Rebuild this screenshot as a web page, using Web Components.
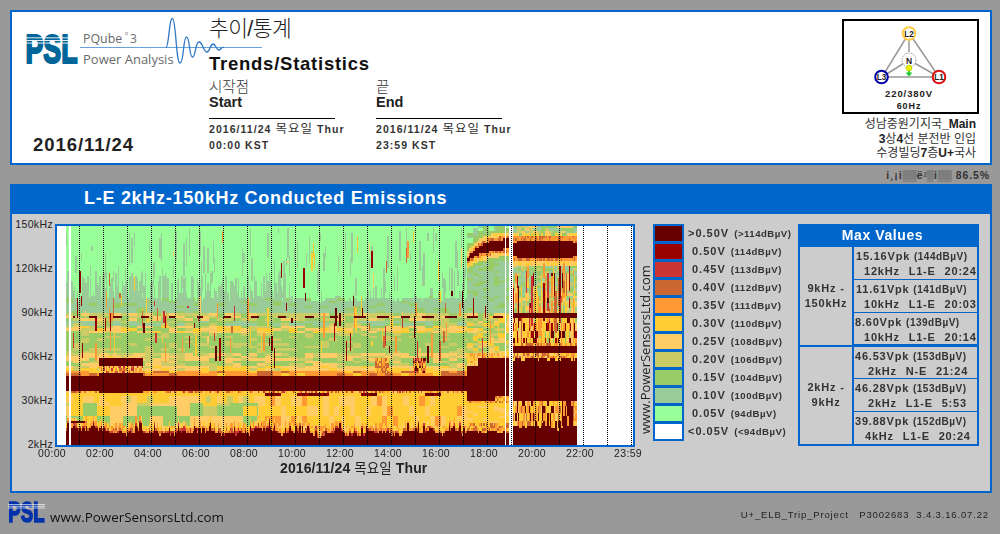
<!DOCTYPE html>
<html lang="ko">
<head>
<meta charset="utf-8">
<title>PQube 3 Trends/Statistics</title>
<style>
  html, body { margin: 0; padding: 0; }
  body {
    width: 1000px; height: 534px; overflow: hidden; background: #999;
    font-family: "Liberation Sans", "Noto Sans CJK KR", sans-serif; color: #222;
  }
</style>
</head>
<body>
<psl-header></psl-header>
<psl-status></psl-status>
<chart-panel></chart-panel>
<psl-footer></psl-footer>

<script>
const KR = '"Liberation Sans", "Noto Sans CJK KR", sans-serif';
const URL_FONT = '"Open Sans", "Noto Sans", sans-serif';

class PslMark extends HTMLElement {
  constructor() { super(); this.attachShadow({ mode: 'open' }); }
  connectedCallback() {
    const color = this.getAttribute('color') || '#006699';
    const w = this.getAttribute('width') || 53;
    this.shadowRoot.innerHTML = `
      <style>
        :host { display: block; line-height: 0; }
        text { font-family: "Liberation Sans", sans-serif; font-weight: bold; }
      </style>
      <svg width="${w}" height="${w * 31 / 53}" viewBox="0 0 53 31">
        <text x="0.500" y="30.200" font-size="41" textLength="52" lengthAdjust="spacingAndGlyphs"
              fill="${color}" stroke="${color}" stroke-width="2.200">PSL</text>
        <g fill="#fff">
          <rect x="0" y="4.400" width="53" height=".9"/>
          <rect x="0" y="7" width="53" height=".9"/>
          <rect x="0" y="9.600" width="53" height=".9"/>
        </g>
      </svg>`;
  }
}
customElements.define('psl-mark', PslMark);

class PslLogo extends HTMLElement {
  constructor() { super(); this.attachShadow({ mode: 'open' }); }
  connectedCallback() {
    this.shadowRoot.innerHTML = `
      <style>
        :host { display: block; position: relative; height: 50px; padding-top: 18px; }
        svg { position: absolute; left: 0; top: 0; overflow: visible; }
        text { font-family: "Open Sans", "Noto Sans", sans-serif; fill: #6a6a6a; }
      </style>
      <psl-mark></psl-mark>
      <svg width="240" height="60" viewBox="25 15 240 60">
        <text x="83" y="43" font-size="12.400">PQube</text>
        <text x="125" y="35" font-size="5">o</text>
        <text x="130" y="43" font-size="12">3</text>
        <text x="83" y="63.500" font-size="13">Power Analysis</text>
        <path d="M80 47.500H262" stroke="#66a3dd" stroke-width="1" fill="none"/>
        <path d="M166 47.500C169 47 169 18 172.500 18.500C176 19 176 63 180 63C184 63 183 37 186.500 37C190 37 189 57 192.500 57C196 57 195 42 199 42C203 42 203 52 207 52C210 52 210 44 213 44C216 44 216 50 219 50C221 50 221 46.500 224 47.500"
              stroke="#2f78c4" stroke-width="1.300" fill="none"/>
      </svg>`;
  }
}
customElements.define('psl-logo', PslLogo);

class PhaseDiagram extends HTMLElement {
  constructor() { super(); this.attachShadow({ mode: 'open' }); }
  connectedCallback() {
    const node = (x, y, c, t) => `
      <circle cx="${x}" cy="${y}" r="6.300" fill="#fff" stroke="${c}" stroke-width="2"/>
      <text x="${x}" y="${y + 3}" font-size="8.200" text-anchor="middle">${t}</text>`;
    this.shadowRoot.innerHTML = `
      <style>
        :host { display: block; width: 137px; height: 95px; box-sizing: border-box; border: 2px solid #000; background: #fff; margin-left: auto; }
        svg { display: block; }
        text { font-family: "Liberation Sans", sans-serif; font-weight: bold; fill: #222; }
      </style>
      <svg width="133" height="91" viewBox="844 21 133 91">
        <path d="M909 33L882 77H939Z M909 60L882 77 M909 60L939 77" stroke="#999" stroke-width="1.500" fill="none"/>
        <path d="M909 33V52" stroke="#999" stroke-width="1.500"/>
        <circle cx="909" cy="60" r="7" fill="#fff" stroke="#999" stroke-width="1" stroke-dasharray="1.500 1"/>
        <text x="909" y="63.500" font-size="8.500" text-anchor="middle">N</text>
        <path d="M909 69V75" stroke="#22cc33" stroke-width="2"/>
        <path d="M905.500 72.500H912.500L909 76.500Z" fill="#22cc33"/>
        <circle cx="909" cy="68" r="3" fill="#eeee00" stroke="#99cc00" stroke-width=".6"/>
        ${node(909, 33.500, '#ffcc44', 'L2')}
        ${node(881.500, 77, '#0000aa', 'L3')}
        ${node(939, 77, '#dd1111', 'L1')}
        <text x="909" y="97" font-size="9.500" text-anchor="middle" letter-spacing=".9">220/380V</text>
        <text x="909" y="109" font-size="9" text-anchor="middle" letter-spacing=".9">60Hz</text>
      </svg>`;
  }
}
customElements.define('phase-diagram', PhaseDiagram);

class RangeBlock extends HTMLElement {
  constructor() { super(); this.attachShadow({ mode: 'open' }); }
  connectedCallback() {
    const ko = this.getAttribute('ko');
    const en = this.getAttribute('en');
    const time = this.getAttribute('time');
    this.shadowRoot.innerHTML = `
      <style>
        :host { display: block; width: 126px; font-family: ${KR}; }
        .ko { font-size: 14.500px; line-height: 15px; color: #333; font-weight: 300; }
        .en { font-size: 14.500px; line-height: 14px; font-weight: bold; color: #222; }
        .rule { height: 1px; background: #000; margin: 9px 0 2px; }
        .line { font-size: 10.500px; line-height: 16px; font-weight: bold; letter-spacing: 1.050px; color: #333; white-space: nowrap; }
        .line span { font-weight: 400; font-size: 12.500px; }
      </style>
      <div class="ko">${ko}</div>
      <div class="en">${en}</div>
      <div class="rule"></div>
      <div class="line">2016/11/24 <span>목요일</span> Thur</div>
      <div class="line">${time} KST</div>`;
  }
}
customElements.define('range-block', RangeBlock);

class PslHeader extends HTMLElement {
  constructor() { super(); this.attachShadow({ mode: 'open' }); }
  connectedCallback() {
    this.shadowRoot.innerHTML = `
      <style>
        :host {
          display: flex; box-sizing: border-box; width: 982px; height: 155px; margin: 10px 0 0 10px;
          border: 2px solid #0066cc; background: #fff; font-family: ${KR};
        }
        .left { width: 197px; flex: none; display: flex; flex-direction: column; justify-content: space-between; padding: 3px 0 7px 13px; box-sizing: border-box; }
        .date { font-size: 18.500px; font-weight: bold; letter-spacing: .95px; color: #222; padding-left: 8px; line-height: 22px; }
        .mid { flex: 1; padding-top: 3px; }
        .title-ko { font-size: 21.500px; line-height: 29px; color: #222; font-weight: 300; letter-spacing: -.6px; }
        .title-en { font-size: 18.500px; line-height: 22px; font-weight: bold; margin-top: 9px; letter-spacing: .75px; color: #111; }
        .ranges { display: flex; gap: 41px; margin-top: 5px; }
        .right { flex: none; padding: 7px 11px 0 0; box-sizing: border-box; width: 148px; }
        .site { text-align: right; font-size: 12px; line-height: 14.500px; color: #333; margin: 3px 3px 0 -20px; white-space: nowrap; }
        .site b { color: #222; }
      </style>
      <div class="left">
        <psl-logo></psl-logo>
        <div class="date">2016/11/24</div>
      </div>
      <div class="mid">
        <div class="title-ko">추이/통계</div>
        <div class="title-en">Trends/Statistics</div>
        <div class="ranges">
          <range-block ko="시작점" en="Start" time="00:00"></range-block>
          <range-block ko="끝" en="End" time="23:59"></range-block>
        </div>
      </div>
      <div class="right">
        <phase-diagram></phase-diagram>
        <div class="site">성남중원기지국<b>_Main</b><br><b>3</b>상<b>4</b>선 분전반 인입<br>수경빌딩<b>7</b>층<b>U+</b>국사</div>
      </div>`;
  }
}
customElements.define('psl-header', PslHeader);

class PslStatus extends HTMLElement {
  constructor() { super(); this.attachShadow({ mode: 'open' }); }
  connectedCallback() {
    this.shadowRoot.innerHTML = `
      <style>
        :host { display: block; height: 19px; padding-right: 10px; text-align: right; font-family: ${KR}; font-size: 10.500px; line-height: 21px; font-weight: bold; color: #333; letter-spacing: .9px; }
        small { font-size: 10px; font-weight: 400; letter-spacing: 0; }
      </style>
      i¸¡i<small>▒▒</small>ë<small>²▒</small>i<small>▒▒</small> 86.5%`;
  }
}
customElements.define('psl-status', PslStatus);

class HeatMap extends HTMLElement {
  constructor() { super(); this.attachShadow({ mode: 'open' }); }
  connectedCallback() {
    this.shadowRoot.innerHTML = `
      <style>
        :host { display: block; box-sizing: border-box; width: 580px; height: 223px; border: 2px solid #0066cc; background: #fff; }
        canvas { display: block; }
      </style>
      <canvas width="576" height="219"></canvas>`;
    this.draw(this.shadowRoot.querySelector('canvas').getContext('2d'));
  }

  draw(ctx) {
    const pal = ['#ffffff', '#99ff99', '#99cc99', '#99cc66', '#cccc66', '#ffcc66', '#ffcc33', '#ff9933', '#cc6633', '#cc3333', '#990000', '#660000'];
    let seed = 20161124;
    const rnd = () => {
      seed = (seed + 0x6D2B79F5) | 0;
      let t = Math.imul(seed ^ (seed >>> 15), 1 | seed);
      t = (t + Math.imul(t ^ (t >>> 7), 61 | t)) ^ t;
      return ((t ^ (t >>> 14)) >>> 0) / 4294967296;
    };
    const COLS = 432, ROWS = 88;
    const cw = 4 / 3, rh = 2.5;

    // noise tables: cell, per column, slow along time, vertical streaks
    const cell = [], col = [], slow = [], spikes = [], gray = [];
    for (let i = 0; i < COLS; i++) {
      cell.push(Array.from({ length: ROWS }, rnd));
      col.push(rnd());
      const x = 57 + i * cw;
      const list = [];
      const n = x > 512 ? 4 : 2;
      for (let k = 0; k < n; k++) {
        if (rnd() < (x > 512 ? .3 : .2)) {
          const high = rnd() < .22;
          const y0 = x > 512 ? 262 + rnd() * 60 : (high ? 228 + rnd() * 50 : 290 + rnd() * 58);
          const len = 4 + rnd() * (x > 512 ? 40 : 20);
          const lows = [6, 7, 5, 8, 6, 7, 9, 10, 11];
          const highs = [6, 7, 5, 6, 8, 10];
          const lv = high ? highs[Math.floor(rnd() * 6)] : lows[Math.floor(rnd() * 9)];
          list.push([y0, y0 + len, lv]);
        }
      }
      spikes.push(list);
      // grey streaks running down from the top of the green area
      const g = [];
      if (rnd() < .42) { const y0 = 226 + rnd() * 70; g.push([y0, y0 + 6 + rnd() * 30]); }
      if (x < 290 && rnd() < .6) g.push([272 + rnd() * 20, 300]);
      gray.push(g);
    }
    let s = 0;
    for (let i = 0; i < COLS; i++) { s = s * .8 + (rnd() - .5) * 1.300; slow.push(s); }
    const chunk = (i, j, w) => cell[Math.floor(i / w) * w][j];
    const vrun = (i, j, h) => cell[i][Math.floor(j / h) * h];
    const pick = (a, r) => a[Math.min(a.length - 1, Math.floor(r * a.length))];

    const dashes = [[72,75],[88,96],[113,121],[141,148],[168,175],[197,203],[223,231],[251,259],[278,286],[305,313],[330,338],[354,365],[377,388],[400,410],[422,433],[445,456],[467,477],[493,503]];
    const isDash = x => dashes.some(d => x >= d[0] && x <= d[1]);

    const mids = (y, i, j, x) => {
      const c = chunk(i, j, 6);
      if (y < 298 + slow[i] * 2) {
        for (const g of gray[i]) if (y >= g[0] && y < g[1]) return 2;
        return 1;
      }
      if (y < 312) return pick([2, 2, 2, 2, 3, 2], c);
      if (y < 319) return pick([4, 4, 5, 3], c);
      if (y < 326) return pick([2, 3, 3, 2, 4], c);
      if (y < 333) return pick([5, 5, 4, 3, 6], c);
      if (y < 353) return pick([3, 3, 3, 4, 3], c);
      if (y < 359) return pick([5, 5, 4, 3], c);
      if (y < 366) return pick([3, 3, 4, 5], c);
      if (y < 370) return pick([5, 5, 6, 4], c);
      return pick([7, 6, 7, 8], c);
    };

    const levelA = (x, y, i, j) => {
      const c = chunk(i, j, 3), r = cell[i][j];
      const big = x >= 99 && x <= 143;
      if (big && y >= 358 && y < 364.500) return 11;
      if (big && y >= 352 && y < 358) return pick([5, 4, 5, 6], c);
      if (big && y >= 364.500 && y < 373) return pick([7, 8, 6, 5, 9], r);
      if (x >= 375 && x <= 388 && y >= 358 && y < 372) return pick([7, 8, 8, 6], r);
      if (x >= 412 && x <= 425 && y >= 358 && y < 373) return pick([8, 9, 7, 11, 6], r);
      if (y >= (big ? 372 : 375.500) && y < (big ? 393 : 389)) return 11;
      if (x > 70 && x < 84 && y >= 420 && y < 423) return 11;
      const jag = 432 + slow[i] * 3.500 - (x < 100 ? 3 : 0) - (col[i] > .9 ? 6 : 0);
      if (y >= jag) return 11;
      if (y >= jag - 3) return pick([8, 7, 7, 9], r);
      if (y >= jag - 8) return pick([6, 7, 6, 5], vrun(i, j, 3));
      if (y >= 375) {
        if (y < 393) return pick([6, 7, 5, 8, 6, 9], r);
        if (y < 396) return x > 258 && chunk(i, j, 12) > .62 ? pick([11, 10], r) : 6;
        const w = chunk(i, Math.floor(j / 4) * 4, 4);
        if (x > 258) return pick([6, 6, 5, 6, 5, 7], w);
        if (y < 403) return pick([6, 5, 6, 4], w);
        return pick([5, 5, 3, 4, 6, 3, 3], chunk(i, Math.floor(j / 4) * 4, 10));
      }
      if (y >= 314 && y < 317 && isDash(x)) return 11;
      for (const sp of spikes[i]) if (y >= sp[0] && y < sp[1] && x > 71) return sp[2];
      return mids(y, i, j, x);
    };

    const levelB = (x, y, i, j) => {
      const c = chunk(i, j, 4), r = cell[i][j];
      const arc = 259 - 17 * (1 - Math.exp(-(x - 467) / 15));
      const d = Math.abs(y - arc);
      if (y >= (x < 478 ? 365 : 358) && y < (x > 495 ? 395 : 399)) return 11;
      const jag = 431 + slow[i] * 2;
      if (y >= jag) return 11;
      if (y >= 422) return pick([7, 8, 6], r);
      if (y >= 402) return pick([6, 6, 5, 6], c);
      if (y >= 395) return pick([7, 6, 8], r);
      const half = 1.500 + Math.min(3.500, (x - 467) / 5);
      if (d < half) return 11;
      if (d < half + 3) return pick([7, 8, 7], r);
      if (d < half + 7) return pick([5, 6, 5], r);
      if (d < half + 11) return 3;
      if (y < arc) return pick([1, 3, 2, 3], c);
      if (y >= 314 && y < 317 && isDash(x)) return 11;
      for (const sp of spikes[i]) if (y > 285 && y >= sp[0] && y < sp[1]) return sp[2];
      if (y < 312) return pick([2, 2, 2, 3], c);
      if (y < 352) return pick([3, 4, 5, 3, 6], c);
      return pick([5, 6, 7], r);
    };

    const levelC = (x, y, i, j) => {
      const c = chunk(i, j, 3), r = cell[i][j];
      const e = x < 516 || x > 572 ? 2 : 0;
      if (y >= 240 + e && y < 257.500 - e) return 11;
      if (y >= 313 && y < 317.500) return 11;
      if (y >= 346 && y < 352) return 11;
      if (y >= 358 + (r < .2 ? 2 : 0) && y < 399) return 11;
      if (y >= 426 + slow[i] * 3) return 11;
      if (x > 562 && x < 573 && y >= 400) return vrun(i, j, 4) < .8 ? 11 : 7;
      if (y >= 399) {
        if (x > 573) return pick([6, 7, 5], r);
        return pick([7, 6, 8, 5, 7, 6, 11], vrun(i, j, 3));
      }
      for (const sp of spikes[i]) if (y >= sp[0] && y < sp[1] && y < 345) return sp[2];
      if (y < 232) return pick([2, 3, 4, 5], c);
      if (y < 235) return pick([5, 6, 3], r);
      if (y < 260) return pick([7, 7, 8], r);
      if (y < 264) return pick([5, 6, 5], r);
      if (y < 290) return pick([2, 3, 2, 4], c);
      if (y < 313) return pick([3, 4, 2, 5], c);
      if (y < 343) return pick([6, 7, 5, 3, 11, 10, 6], vrun(i, j, 3));
      if (y < 346) return pick([7, 6, 8], r);
      return pick([6, 7, 5, 8], r);
    };

    for (let i = 0; i < COLS; i++) {
      const x = 57 + i * cw;
      for (let j = 0; j < ROWS; j++) {
        const y = 226 + j * rh;
        let lv = 0;
        if (x >= 66 && x < 68) lv = levelA(x, y, i, j);
        else if (x >= 71 && x < 467) lv = levelA(x, y, i, j);
        else if (x >= 467 && x < 504) lv = levelB(x, y, i, j);
        else if (x >= 505.500 && x < 508) lv = levelB(x, y, i, j);
        else if (x >= 512 && x < 576) lv = levelC(x, y, i, j);
        ctx.fillStyle = pal[lv];
        ctx.fillRect(Math.floor(x - 57), Math.floor(y - 226), Math.ceil(cw), Math.ceil(rh));
      }
    }

    // hour gridlines
    ctx.fillStyle = '#000';
    for (let h = 1; h <= 24; h++) {
      const gx = 24 * h - 2;
      for (let y = 0; y < 219; y += 2) ctx.fillRect(gx, y, 1, 1);
    }
  }
}
customElements.define('heat-map', HeatMap);

class HeatChart extends HTMLElement {
  constructor() { super(); this.attachShadow({ mode: 'open' }); }
  connectedCallback() {
    const ys = ['150kHz', '120kHz', '90kHz', '60kHz', '30kHz', '2kHz'];
    const xs = ['00:00','02:00','04:00','06:00','08:00','10:00','12:00','14:00','16:00','18:00','20:00','22:00','23:59'];
    this.shadowRoot.innerHTML = `
      <style>
        :host { display: grid; grid-template-columns: 43px 580px; grid-template-rows: 223px 13px auto; width: 630px; font-family: ${KR}; color: #222; font-size: 10.500px; letter-spacing: .35px; }
        .y { display: flex; flex-direction: column; justify-content: space-between; align-items: flex-end; height: 232px; margin-top: -6px; padding-right: 2px; }
        .y span { line-height: 12px; }
        .x { grid-column: 2; display: flex; justify-content: space-between; width: 604px; margin-left: -17px; line-height: 13px; }
        .x span { width: 28px; text-align: center; }
        .date { grid-column: 2; font-size: 14px; font-weight: bold; line-height: 17px; letter-spacing: .1px; padding-left: 225px; white-space: nowrap; }
        .date span { font-weight: 400; font-size: 13.500px; }
      </style>
      <div class="y">${ys.map(t => `<span>${t}</span>`).join('')}</div>
      <heat-map></heat-map>
      <div class="x">${xs.map(t => `<span>${t}</span>`).join('')}</div>
      <div class="date">2016/11/24 <span>목요일</span> Thur</div>`;
  }
}
customElements.define('heat-chart', HeatChart);

class HeatLegend extends HTMLElement {
  constructor() { super(); this.attachShadow({ mode: 'open' }); }
  connectedCallback() {
    const rows = [
      ['#660000', '>0.50V', '(>114dBµV)', 1], ['#990000', '0.50V', '(114dBµV)'],
      ['#cc3333', '0.45V', '(113dBµV)'], ['#cc6633', '0.40V', '(112dBµV)'],
      ['#ff9933', '0.35V', '(111dBµV)'], ['#ffcc33', '0.30V', '(110dBµV)'],
      ['#ffcc66', '0.25V', '(108dBµV)'], ['#cccc66', '0.20V', '(106dBµV)'],
      ['#99cc66', '0.15V', '(104dBµV)'], ['#99cc99', '0.10V', '(100dBµV)'],
      ['#99ff99', '0.05V', '(94dBµV)'], ['#ffffff', '<0.05V', '(<94dBµV)', 1]
    ];
    const esc = t => t.replace('<', '&lt;');
    this.shadowRoot.innerHTML = `
      <style>
        :host { display: flex; align-items: flex-start; gap: 4px; width: 145px; font-family: ${KR}; color: #333; }
        .bar { display: flex; flex-direction: column; gap: 3px; background: #0066cc; padding: 2px; width: 27px; flex: none; }
        .bar i { display: block; height: 15px; }
        .labels { display: flex; flex-direction: column; gap: 3px; padding-top: 2px; white-space: nowrap; }
        .labels div { height: 15px; line-height: 15px; font-weight: bold; font-size: 11px; letter-spacing: 1px; padding-left: 4px; }
        .labels div.edge { padding-left: 0; }
        .labels small { font-size: 9.600px; letter-spacing: .5px; margin-left: 1px; }
      </style>
      <div class="bar">${rows.map(r => `<i style="background:${r[0]}"></i>`).join('')}</div>
      <div class="labels">${rows.map(r => `<div class="${r[3] ? 'edge' : ''}">${esc(r[1])} <small>${esc(r[2])}</small></div>`).join('')}</div>`;
  }
}
customElements.define('heat-legend', HeatLegend);

class MaxValues extends HTMLElement {
  constructor() { super(); this.attachShadow({ mode: 'open' }); }
  connectedCallback() {
    const groups = [
      ['9kHz -<br>150kHz', [
        ['15.16Vpk', '(144dBµV)', '12kHz L1-E 20:24', 2, 10],
        ['11.61Vpk', '(141dBµV)', '10kHz L1-E 20:03', 2, 10],
        ['8.60Vpk', '(139dBµV)', '10kHz L1-E 20:14', 1, 10]
      ]],
      ['2kHz -<br>9kHz', [
        ['46.53Vpk', '(153dBµV)', '2kHz N-E 21:24', 1, 14],
        ['46.28Vpk', '(153dBµV)', '2kHz L1-E 5:53', 1, 14],
        ['39.88Vpk', '(152dBµV)', '4kHz L1-E 20:24', 1, 11]
      ]]
    ];
    const row = r => `
      <div class="cell">
        <div style="padding-left:${r[3]}px">${r[0]} <small>${r[1]}</small></div>
        <div class="where" style="padding-left:${r[4]}px">${r[2]}</div>
      </div>`;
    this.shadowRoot.innerHTML = `
      <style>
        :host { display: flex; flex-direction: column; gap: 1px; box-sizing: border-box; width: 181px; height: 222px; background: #0066cc; border: 2px solid #0066cc; font-family: ${KR}; color: #333; font-size: 11px; font-weight: bold; letter-spacing: .8px; }
        .head { height: 20px; line-height: 18px; padding-right: 12px; text-align: center; color: #fff; font-size: 14px; letter-spacing: .6px; }
        .group { flex: 1; display: flex; gap: 2px; }
        .group + .group { margin-top: 1px; }
        .name { width: 52px; flex: none; background: #ccc; display: flex; align-items: center; justify-content: center; text-align: center; line-height: 15px; }
        .cells { flex: 1; display: flex; flex-direction: column; gap: 1px; }
        .cell { flex: 1; background: #ccc; padding-top: 2px; line-height: 14px; white-space: nowrap; }
        .where { word-spacing: 5px; }
        small { font-size: 10px; letter-spacing: .5px; }
      </style>
      <div class="head">Max Values</div>
      ${groups.map(g => `
        <div class="group">
          <div class="name">${g[0]}</div>
          <div class="cells">${g[1].map(row).join('')}</div>
        </div>`).join('')}`;
  }
}
customElements.define('max-values', MaxValues);

class ChartPanel extends HTMLElement {
  constructor() { super(); this.attachShadow({ mode: 'open' }); }
  connectedCallback() {
    this.shadowRoot.innerHTML = `
      <style>
        :host { display: block; box-sizing: border-box; width: 982px; height: 309px; margin-left: 10px; border: 2px solid #0066cc; border-top: 0; background: #ccc; font-family: ${KR}; }
        .bar { height: 30px; margin: 0 -2px; background: #0066cc; color: #fff; font-size: 18px; font-weight: bold; line-height: 29px; padding-left: 74px; letter-spacing: .72px; }
        .body { display: flex; align-items: flex-start; padding-top: 10px; }
        .url { width: 15px; flex: none; margin-left: -4px; height: 210px; writing-mode: vertical-rl; transform: rotate(180deg); font-family: ${URL_FONT}; font-size: 13px; line-height: 15px; color: #222; white-space: nowrap; }
      </style>
      <div class="bar">L-E 2kHz-150kHz Conducted Emissions</div>
      <div class="body">
        <heat-chart></heat-chart>
        <div class="url">www.PowerSensorsLtd.com</div>
        <heat-legend></heat-legend>
        <max-values></max-values>
      </div>`;
  }
}
customElements.define('chart-panel', ChartPanel);

class PslFooter extends HTMLElement {
  constructor() { super(); this.attachShadow({ mode: 'open' }); }
  connectedCallback() {
    this.shadowRoot.innerHTML = `
      <style>
        :host { display: flex; align-items: flex-end; padding: 0 11px 11px 8px; box-sizing: border-box; margin-top: 8px; height: 33px; }
        .url { font-family: ${URL_FONT}; font-size: 13.400px; line-height: 16px; color: #111; margin: 0 0 -2px 5px; }
        .build { margin-left: auto; font-family: ${KR}; font-size: 9.500px; letter-spacing: .85px; color: #222; line-height: 16px; white-space: pre; }
      </style>
      <psl-mark color="#0033aa" width="37"></psl-mark>
      <div class="url">www.PowerSensorsLtd.com</div>
      <div class="build">U+_ELB_Trip_Project   P3002683  3.4.3.16.07.22</div>`;
  }
}
customElements.define('psl-footer', PslFooter);
</script>
</body>
</html>
